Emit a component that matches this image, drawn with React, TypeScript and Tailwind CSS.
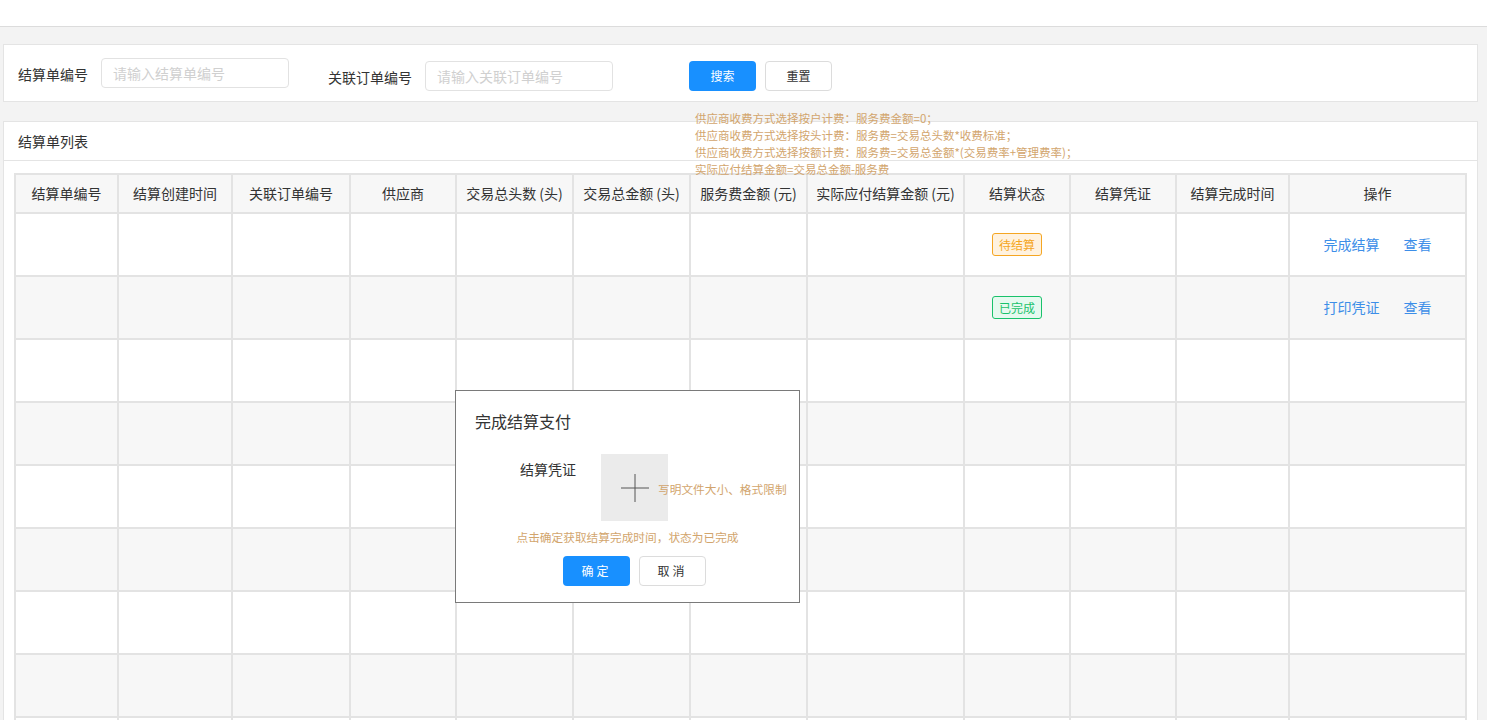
import React from 'react';

const FONT = '[font-family:"Noto_Sans_CJK_SC","Noto_Sans",sans-serif]';

const COLUMNS = [
  { title: '结算单编号', w: 103 },
  { title: '结算创建时间', w: 114 },
  { title: '关联订单编号', w: 118 },
  { title: '供应商', w: 106 },
  { title: '交易总头数 (头)', w: 117 },
  { title: '交易总金额 (头)', w: 117 },
  { title: '服务费金额 (元)', w: 117 },
  { title: '实际应付结算金额 (元)', w: 157 },
  { title: '结算状态', w: 106 },
  { title: '结算凭证', w: 106 },
  { title: '结算完成时间', w: 113 },
  { title: '操作', w: 177 },
];

type Row = { status?: 'pending' | 'done' };

const ROWS: Row[] = [
  { status: 'pending' },
  { status: 'done' },
  {}, {}, {}, {}, {}, {}, {},
];

const StatusTag: React.FC<{ status: 'pending' | 'done' }> = ({ status }) =>
  status === 'pending' ? (
    <span className="inline-flex items-center h-[23px] px-[6px] rounded-[3px] border border-[#f5a623] bg-[#fff2df] text-[#f5a623] text-[12px]">
      待结算
    </span>
  ) : (
    <span className="inline-flex items-center h-[23px] px-[6px] rounded-[3px] border border-[#19c26b] bg-[#e6f9ef] text-[#19c26b] text-[12px]">
      已完成
    </span>
  );

export default function App() {
  return (
    <div className={`${FONT} w-[1487px] h-[720px] overflow-hidden bg-[#f3f3f3] text-[#333] relative`}>
      {/* top bar */}
      <div className="h-[27px] bg-white border-b border-[#dcdcdc]" />

      <div className="pl-[3px] pr-[9px] pt-[17px]">
        {/* search panel */}
        <div className="h-[58px] bg-white border border-[#e4e4e4] flex items-start pl-[14px] text-[14px]">
          <span className="mt-[19px] leading-[20px] mr-[13px]">结算单编号</span>
          <div className="mt-[13px] w-[188px] h-[30px] border border-[#e2e2e2] rounded-[4px] flex items-center px-[11px] text-[14px] text-[#d0d0d0]">
            请输入结算单编号
          </div>
          <span className="mt-[22px] leading-[20px] ml-[39px] mr-[13px]">关联订单编号</span>
          <div className="mt-[16px] w-[188px] h-[30px] border border-[#e2e2e2] rounded-[4px] flex items-center px-[11px] text-[14px] text-[#d0d0d0]">
            请输入关联订单编号
          </div>
          <button className="mt-[16px] ml-[76px] w-[67px] h-[30px] rounded-[4px] bg-[#1890ff] text-white text-[12px]">
            搜索
          </button>
          <button className="mt-[16px] ml-[9px] w-[67px] h-[30px] rounded-[4px] border border-[#dcdcdc] bg-white text-[#333] text-[12px]">
            重置
          </button>
        </div>

        {/* list panel */}
        <div className="mt-[19px] bg-white border border-[#e4e4e4]">
          <div className="h-[39px] flex items-center pl-[14px] text-[14px] border-b border-[#e4e4e4]">
            结算单列表
          </div>
          <div className="pt-[12px] pl-[10px]">
            <table className="table-fixed border-collapse w-[1451px] text-[14px]">
              <colgroup>
                {COLUMNS.map((c) => (
                  <col key={c.title} style={{ width: c.w }} />
                ))}
              </colgroup>
              <thead>
                <tr className="h-[39px] bg-[#f7f7f7]">
                  {COLUMNS.map((c) => (
                    <th key={c.title} className="border-2 border-[#e3e3e3] font-normal text-center text-[#333] p-0">
                      {c.title}
                    </th>
                  ))}
                </tr>
              </thead>
              <tbody>
                {ROWS.map((r, i) => (
                  <tr key={i} className={i % 2 === 0 ? 'h-[63px] bg-white' : 'h-[63px] bg-[#f7f7f7]'}>
                    {COLUMNS.map((c, j) => (
                      <td key={c.title} className="border-2 border-[#e3e3e3] text-center p-0">
                        {j === 8 && r.status && <StatusTag status={r.status} />}
                        {j === 11 && r.status && (
                          <div className="flex justify-center gap-[24px] text-[#3c8ee8]">
                            <span>{r.status === 'pending' ? '完成结算' : '打印凭证'}</span>
                            <span>查看</span>
                          </div>
                        )}
                      </td>
                    ))}
                  </tr>
                ))}
              </tbody>
            </table>
          </div>
        </div>
      </div>

      {/* fee notes overlay */}
      <div className="absolute left-[695px] top-[110px] text-[11.5px] leading-[17px] text-[#d2a56d] whitespace-nowrap">
        <div>供应商收费方式选择按户计费：服务费金额=0；</div>
        <div>供应商收费方式选择按头计费：服务费=交易总头数*收费标准；</div>
        <div>供应商收费方式选择按额计费：服务费=交易总金额*(交易费率+管理费率)；</div>
        <div>实际应付结算金额=交易总金额-服务费</div>
      </div>

      {/* modal */}
      <div className="absolute left-[455px] top-[390px] w-[345px] h-[213px] bg-white border border-[#7a7a7a]">
        <div className="pl-[19px] pt-[18px] text-[16px] text-[#333]">完成结算支付</div>
        <div className="flex mt-[21px] pl-[64px]">
          <span className="text-[14px] mt-[5px]">结算凭证</span>
          <div className="ml-[25px] w-[67px] h-[67px] bg-[#ebebeb] flex items-center justify-center shrink-0">
            <svg width="28" height="28" viewBox="0 0 28 28">
              <path d="M14 0v28M0 14h28" stroke="#555" strokeWidth="1" fill="none" />
            </svg>
          </div>
          <span className="-ml-[10px] mt-[26px] text-[11.7px] text-[#d2a56d] whitespace-nowrap">
            写明文件大小、格式限制
          </span>
        </div>
        <div className="mt-[7px] text-center text-[11.7px] text-[#d2a56d]">
          点击确定获取结算完成时间，状态为已完成
        </div>
        <div className="flex justify-center gap-[9px] mt-[10px] pl-[14px]">
          <button className="w-[67px] h-[30px] rounded-[4px] bg-[#1890ff] text-white text-[12px] tracking-[3px]">
            确定
          </button>
          <button className="w-[67px] h-[30px] rounded-[4px] border border-[#dcdcdc] bg-white text-[#333] text-[12px] tracking-[3px]">
            取消
          </button>
        </div>
      </div>
    </div>
  );
}
